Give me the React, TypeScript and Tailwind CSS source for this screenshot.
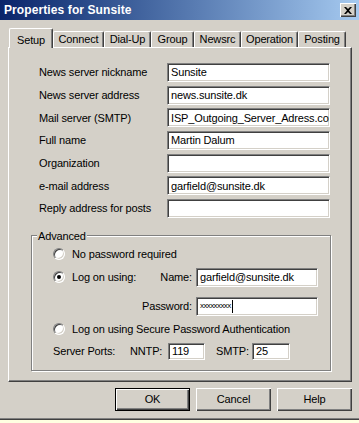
import React from 'react'

const tabs = [
  { label: 'Setup', w: 'w-[44px]' },
  { label: 'Connect', w: 'w-[51px]' },
  { label: 'Dial-Up', w: 'w-[47px]' },
  { label: 'Group', w: 'w-[43px]' },
  { label: 'Newsrc', w: 'w-[47px]' },
  { label: 'Operation', w: 'w-[57px]' },
  { label: 'Posting', w: 'w-[48px]' },
]

const fields = [
  { label: 'News server nickname', value: 'Sunsite' },
  { label: 'News server address', value: 'news.sunsite.dk' },
  { label: 'Mail server (SMTP)', value: 'ISP_Outgoing_Server_Adress.com' },
  { label: 'Full name', value: 'Martin Dalum' },
  { label: 'Organization', value: '' },
  { label: 'e-mail address', value: 'garfield@sunsite.dk' },
  { label: 'Reply address for posts', value: '' },
]

function Field({ value, className, children }: { value?: string; className: string; children?: React.ReactNode }) {
  return (
    <div
      className={`${className} bg-white border border-t-[#808080] border-l-[#808080] border-b-white border-r-white shadow-[inset_1px_1px_0_#404040,inset_-1px_-1px_0_#d4d0c8] flex items-center pl-[3px] overflow-hidden whitespace-nowrap`}>
      {value}
      {children}
    </div>
  )
}

function Radio({ checked, label }: { checked?: boolean; label: string }) {
  return (
    <div className="flex items-center">
      <span className="w-[12px] h-[12px] rounded-full bg-white border border-t-[#808080] border-l-[#808080] border-b-white border-r-white shadow-[inset_1px_1px_0_#404040,inset_-1px_-1px_0_#d4d0c8] flex items-center justify-center">
        {checked && <span className="w-[4px] h-[4px] rounded-full bg-black" />}
      </span>
      <span className="ml-[7px]">{label}</span>
    </div>
  )
}

function Button({ label, isDefault }: { label: string; isDefault?: boolean }) {
  return (
    <div
      className={
        isDefault
          ? 'w-[75px] h-[23px] flex items-center justify-center border border-black shadow-[inset_1px_1px_0_#fff,inset_-1px_-1px_0_#404040,inset_-2px_-2px_0_#808080]'
          : 'w-[75px] h-[23px] flex items-center justify-center shadow-[inset_1px_1px_0_#fff,inset_-1px_-1px_0_#404040,inset_-2px_-2px_0_#808080]'
      }>
      {label}
    </div>
  )
}

export default function App() {
  return (
    <div className="w-[359px] h-[423px] bg-[#ffffe1] font-['Liberation_Sans',Arial,sans-serif] text-[11px] tracking-[-0.15px] text-black overflow-hidden">
      <div className="h-[420px] bg-[#d4d0c8] border-b border-[#404040] shadow-[inset_0_-1px_0_#808080] flex flex-col">
        {/* title bar */}
        <div className="h-[20px] bg-gradient-to-r from-[#0a246a] to-[#a6caf0] flex items-center justify-between pl-[4px] pr-[3px]">
          <span className="text-white font-bold text-[12px] tracking-[0.1px]">Properties for Sunsite</span>
          <div className="w-[16px] h-[14px] bg-[#d4d0c8] shadow-[inset_1px_1px_0_#fff,inset_-1px_-1px_0_#404040,inset_-2px_-2px_0_#808080] flex items-center justify-center">
            <svg width="8" height="7" viewBox="0 0 8 7">
              <path d="M0 0h2l2 2 2-2h2L5 3.5 8 7H6L4 5 2 7H0l3-3.5z" fill="#000" />
            </svg>
          </div>
        </div>

        {/* tabs */}
        <div className="mt-[8px] pl-[9px] flex items-end h-[19px]">
          {tabs.map((t, i) =>
            i === 0 ? (
              <div
                key={t.label}
                className={`${t.w} h-[20px] -mb-[1px] relative z-10 bg-[#d4d0c8] rounded-t-[2px] border-t border-l border-white border-r border-r-[#404040] shadow-[inset_-1px_0_0_#808080] flex items-start justify-center pt-[3px]`}>
                {t.label}
              </div>
            ) : (
              <div
                key={t.label}
                className={`${t.w} h-[16px] rounded-t-[2px] border-t border-l border-white border-r border-r-[#404040] shadow-[inset_-1px_0_0_#808080] flex items-center justify-center`}>
                {t.label}
              </div>
            ),
          )}
        </div>

        {/* tab panel */}
        <div className="ml-[8px] w-[344px] h-[335px] border-t border-l border-white border-r border-b border-r-[#404040] border-b-[#404040] shadow-[inset_-1px_-1px_0_#808080]">
          <div className="pt-[15px] pl-[30px] flex flex-col gap-[3.67px]">
            {fields.map((f) => (
              <div key={f.label} className="flex items-center h-[19px]">
                <span className="w-[128px]">{f.label}</span>
                <Field className="w-[163px] h-[19px]" value={f.value} />
              </div>
            ))}
          </div>

          {/* Advanced group */}
          <div className="relative mt-[17px] ml-[22px] w-[300px] h-[136px] border border-[#808080] shadow-[1px_1px_0_#fff,inset_1px_1px_0_#fff]">
            <span className="absolute -top-[8px] left-[5px] px-[1px] bg-[#d4d0c8]">Advanced</span>
            <div className="pl-[21px] pt-[11px] flex flex-col">
              <div className="h-[14px] flex items-center">
                <Radio label="No password required" />
              </div>
              <div className="mt-[7px] h-[19px] flex items-center">
                <div className="w-[143px] flex items-center">
                  <Radio checked label="Log on using:" />
                  <span className="ml-auto mr-[4px]">Name:</span>
                </div>
                <Field className="w-[122px] h-[19px]" value="garfield@sunsite.dk" />
              </div>
              <div className="mt-[10px] h-[19px] flex items-center">
                <div className="w-[143px] flex justify-end pr-[4px]">Password:</div>
                <Field className="w-[122px] h-[19px]">
                  <span className="text-[8px] tracking-[-0.6px] leading-none">xxxxxxxxx</span>
                  <span className="ml-[1px] w-[1px] h-[13px] bg-black" />
                </Field>
              </div>
              <div className="mt-[6px] h-[14px] flex items-center">
                <Radio label="Log on using Secure Password Authentication" />
              </div>
              <div className="mt-[7px] h-[17px] flex items-center">
                <span className="w-[77px]">Server Ports:</span>
                <span className="w-[38px]">NNTP:</span>
                <Field className="w-[37px] h-[17px]" value="119" />
                <span className="ml-[11px] w-[36px]">SMTP:</span>
                <Field className="w-[38px] h-[17px]" value="25" />
              </div>
            </div>
          </div>
        </div>

        {/* buttons */}
        <div className="mt-[6px] pr-[7px] flex justify-end gap-[6px]">
          <Button label="OK" isDefault />
          <Button label="Cancel" />
          <Button label="Help" />
        </div>
      </div>
    </div>
  )
}
